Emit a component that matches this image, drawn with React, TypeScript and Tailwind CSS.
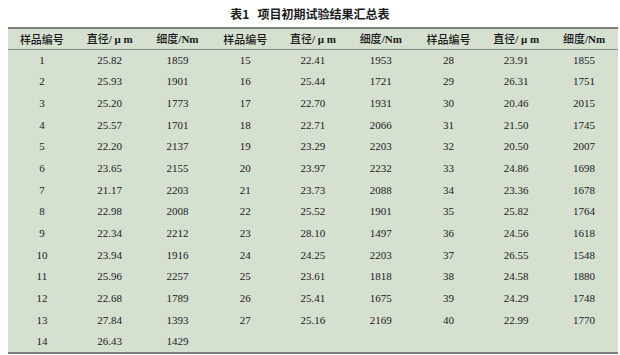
const rows: [string, string, string][][] = [
  [["1", "25.82", "1859"], ["15", "22.41", "1953"], ["28", "23.91", "1855"]],
  [["2", "25.93", "1901"], ["16", "25.44", "1721"], ["29", "26.31", "1751"]],
  [["3", "25.20", "1773"], ["17", "22.70", "1931"], ["30", "20.46", "2015"]],
  [["4", "25.57", "1701"], ["18", "22.71", "2066"], ["31", "21.50", "1745"]],
  [["5", "22.20", "2137"], ["19", "23.29", "2203"], ["32", "20.50", "2007"]],
  [["6", "23.65", "2155"], ["20", "23.97", "2232"], ["33", "24.86", "1698"]],
  [["7", "21.17", "2203"], ["21", "23.73", "2088"], ["34", "23.36", "1678"]],
  [["8", "22.98", "2008"], ["22", "25.52", "1901"], ["35", "25.82", "1764"]],
  [["9", "22.34", "2212"], ["23", "28.10", "1497"], ["36", "24.56", "1618"]],
  [["10", "23.94", "1916"], ["24", "24.25", "2203"], ["37", "26.55", "1548"]],
  [["11", "25.96", "2257"], ["25", "23.61", "1818"], ["38", "24.58", "1880"]],
  [["12", "22.68", "1789"], ["26", "25.41", "1675"], ["39", "24.29", "1748"]],
  [["13", "27.84", "1393"], ["27", "25.16", "2169"], ["40", "22.99", "1770"]],
  [["14", "26.43", "1429"], ["", "", ""], ["", "", ""]],
];

const cjk = { fontFamily: '"Noto Sans CJK SC", sans-serif' };

function HeaderGroup() {
  return (
    <>
      <th className="font-medium" style={cjk}>样品编号</th>
      <th className="font-medium">
        <span style={cjk}>直径</span>
        <span className="font-['Liberation_Serif',serif] font-bold">/ μ m</span>
      </th>
      <th className="font-medium">
        <span style={cjk}>细度</span>
        <span className="font-['Liberation_Serif',serif] font-bold">/Nm</span>
      </th>
    </>
  );
}

export default function App() {
  return (
    <div className="w-[620px] h-[355px] bg-white overflow-hidden text-[#1a1a1a]">
      <div
        className="h-[27px] pt-[5px] text-center text-[12px] font-bold"
        style={{ fontFamily: '"Noto Sans CJK SC", serif' }}
      >
        表1&nbsp;&nbsp;&nbsp;项目初期试验结果汇总表
      </div>
      <table className="ml-[8px] w-[610px] table-fixed border-collapse bg-[#d6e0d1] border-t-2 border-b-2 border-[#7d7d7d]">
        <thead>
          <tr className="h-[21px] border-b border-[#8a8a8a] text-[11px]">
            <HeaderGroup />
            <HeaderGroup />
            <HeaderGroup />
          </tr>
        </thead>
        <tbody className="font-['Liberation_Serif',serif] text-[11px] text-center">
          {rows.map((r, i) => (
            <tr key={i} className="h-[21.7px]">
              {r.flat().map((v, j) => (
                <td key={j}>{v}</td>
              ))}
            </tr>
          ))}
        </tbody>
      </table>
    </div>
  );
}
